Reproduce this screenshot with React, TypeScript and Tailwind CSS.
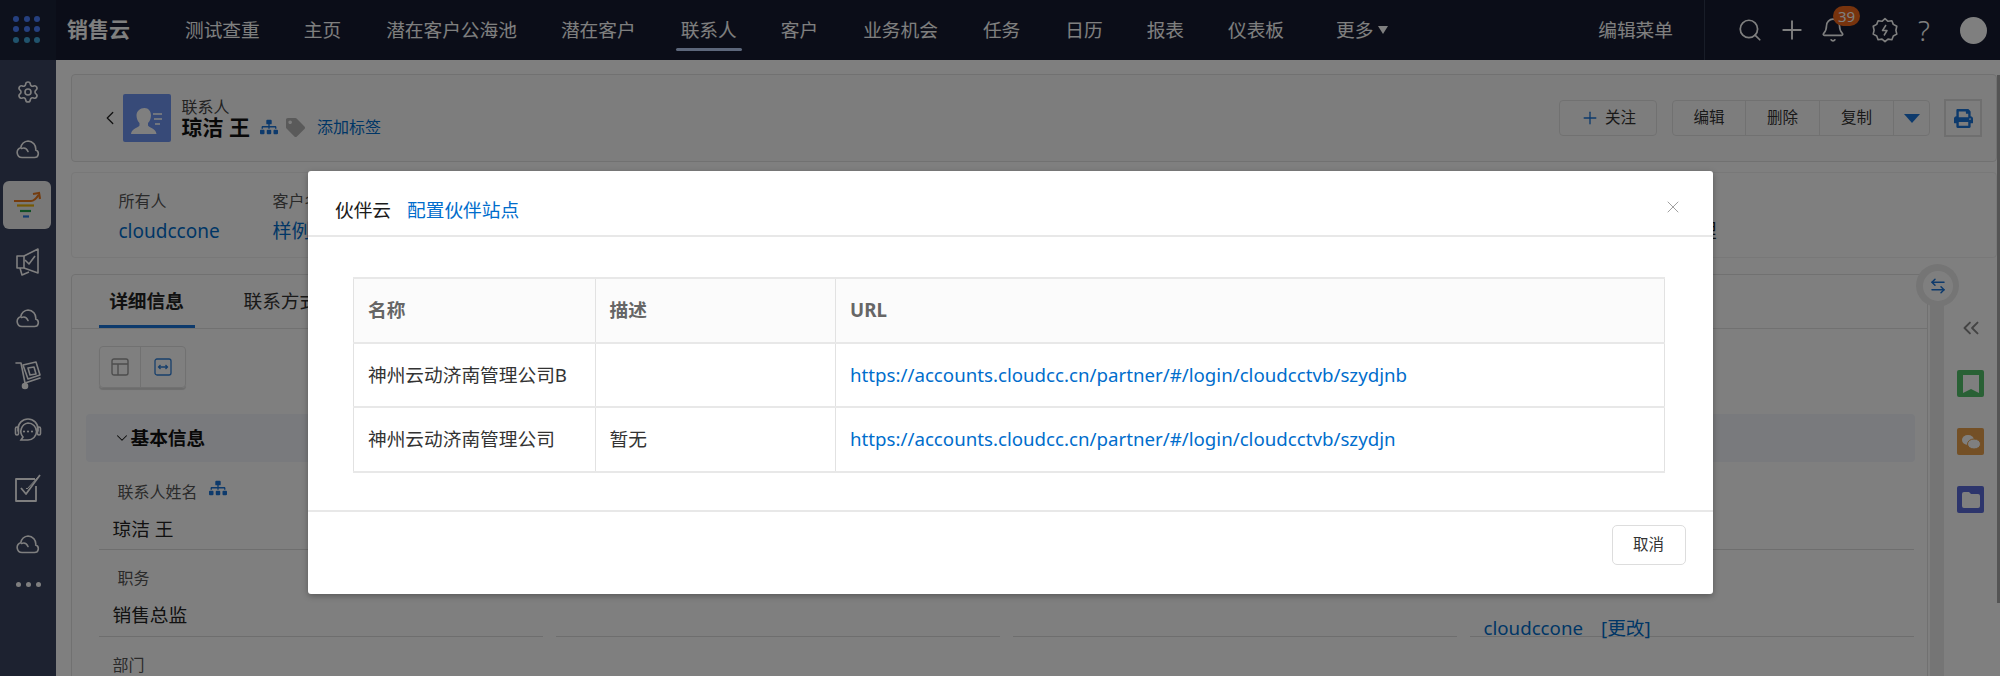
import React from "react";
import { Settings, Search, Plus, Bell, ChevronLeft, ChevronDown, ChevronsLeft, X, ArrowLeftRight } from "lucide-react";
import { FaSitemap, FaTag, FaPrint } from "react-icons/fa";

const font = "font-['Noto_Sans','Noto_Sans_CJK_SC',sans-serif]";
const nav: [string, number][] = [
  ["测试查重", 44], ["主页", 45], ["潜在客户公海池", 44], ["潜在客户", 45], ["联系人", 44], ["客户", 45], ["业务机会", 45], ["任务", 45], ["日历", 44], ["报表", 44], ["仪表板", 52],
];

function Cloud() {
  return (
    <svg width="24" height="22" viewBox="0 0 24 22" fill="none" stroke="white" strokeWidth="1.6" strokeLinecap="round" strokeLinejoin="round">
      <path d="M6 19.5h12.5a3.8 3.8 0 0 0 1.2-7.4A8 8 0 0 0 12 3 7.6 7.6 0 0 0 4.8 9.7 5 5 0 0 0 6 19.5Z" />
      <path d="M5.5 10.5c2.5-1 5-.5 6.5 3" />
    </svg>
  );
}
function Funnel() {
  return (
    <svg width="28" height="28" viewBox="0 0 28 28" fill="none" strokeWidth="2.2">
      <path d="M1 10h17c3 0 5-2 7.5-6" stroke="#e8791e" />
      <path d="M20 3l6-1 1 6" stroke="#e8791e" />
      <path d="M4 14.5h17" stroke="#eab308" />
      <path d="M7 20h11" stroke="#22a04a" />
      <path d="M10 25.5h6" stroke="#2b7de0" />
    </svg>
  );
}
function Megaphone() {
  return (
    <svg width="26" height="30" viewBox="0 0 26 30" fill="none" stroke="white" strokeWidth="1.6" strokeLinejoin="round">
      <path d="M2 9h7v12H2z" />
      <path d="M9 9 23 2v24L9 21" />
      <path d="M5 21l2 7 7-3" />
      <path d="M10 13l4 4 6-8" />
    </svg>
  );
}
function Cart() {
  return (
    <svg width="26" height="30" viewBox="0 0 26 30" fill="none" stroke="white" strokeWidth="1.6" strokeLinejoin="round" strokeLinecap="round">
      <path d="M1 3h5l4 20 15-5" />
      <path d="M8 5l13-3 4 13-12 4z" />
      <path d="M13 8l6-1 2 7-6 1z" />
      <circle cx="10" cy="26" r="2.5" fill="white" />
    </svg>
  );
}
function Headset() {
  return (
    <svg width="28" height="28" viewBox="0 0 28 28" fill="none" stroke="white" strokeWidth="1.6" strokeLinecap="round">
      <path d="M4 14V12a10 10 0 0 1 20 0v2" />
      <rect x="1.5" y="10" width="3" height="8" rx="1.5" />
      <rect x="23.5" y="10" width="3" height="8" rx="1.5" />
      <path d="M14 6a8.5 8.5 0 0 1 0 17H7l2-3a8.5 8.5 0 0 1 5-14Z" />
      <path d="M10 14.5h.01M14 14.5h.01M18 14.5h.01" strokeWidth="2.2" />
    </svg>
  );
}
function Check() {
  return (
    <svg width="28" height="30" viewBox="0 0 28 30" fill="none" stroke="white" strokeWidth="1.8" strokeLinejoin="round">
      <path d="M21 6H2v22h20V13" />
      <path d="M7 15l5 6L26 2" />
      <path d="M12 15l1 1L24 4" strokeWidth="1" />
    </svg>
  );
}
function Gear2() {
  return (
    <svg width="26" height="26" viewBox="0 0 26 26" fill="none" stroke="white" strokeWidth="1.6" strokeLinejoin="round">
      <path d="M13 1.5l3 2.6 3.9-.6 1.4 3.7 3.5 1.9-.9 3.9.9 3.9-3.5 1.9-1.4 3.7-3.9-.6-3 2.6-3-2.6-3.9.6-1.4-3.7-3.5-1.9.9-3.9-.9-3.9 3.5-1.9 1.4-3.7 3.9.6z" transform="translate(0 .2)" />
      <path d="M14 8l-3.5 5.5H15L12 18.5" strokeWidth="1.5" />
    </svg>
  );
}
function Layout1() {
  return (
    <svg width="18" height="18" viewBox="0 0 18 18" fill="none" stroke="#9b9b9b" strokeWidth="1.4">
      <rect x="1" y="1" width="16" height="16" rx="2" />
      <path d="M1 6h16M7 6v11" />
    </svg>
  );
}
function Layout2() {
  return (
    <svg width="18" height="18" viewBox="0 0 18 18" fill="none" stroke="#2f7fd8" strokeWidth="1.3">
      <rect x="1" y="1" width="16" height="16" rx="2" />
      <path d="M4.5 9h9M6.5 7L4.5 9l2 2M11.5 7l2 2-2 2" />
    </svg>
  );
}
function ContactIcon() {
  return (
    <svg width="48" height="48" viewBox="0 0 48 48" fill="white">
      <path d="M21.5 14c4 0 6.500 3.300 6.500 7.500 0 3.200-1.500 6-3 7.500v2.500c0 1.500 8 3 8.500 8.500H8c.5-5.500 8.500-7 8.500-8.500V29c-1.500-1.500-3-4.300-3-7.500 0-4.200 3.500-7.500 8-7.500Z" />
      <path d="M30 19h9v2h-9zM31 24h8v2h-8zM32 29h5v2h-5z" opacity=".8" />
    </svg>
  );
}

function Row({ children }: { children: React.ReactNode }) {
  return <div className="grid grid-cols-[444px_444px_444px_444.500px] gap-x-[13px]">{children}</div>;
}
function Field({ label, value, labelCls = "ml-[19px]", top = "pt-[17px]", icon = false, h = "h-[87.500px]", right = false }: { label?: string; value?: React.ReactNode; labelCls?: string; top?: string; icon?: boolean; h?: string; right?: boolean }) {
  return (
    <div className={`${h} border-b border-[#dcdcdc] ${top}`}>
      {label && (
        <div className={`flex items-center h-[22px] text-[16px] text-[#555] ${labelCls}`}>
          {label}
          {icon && <FaSitemap className="ml-[11px] -mt-[8px] text-[#1a74d8]" size={18} />}
        </div>
      )}
      {value && <div className={`mt-[13px] ml-[14px] h-[26px] leading-[26px] text-[18.700px] ${right ? "text-[#006dcc]" : "text-[#222]"}`}>{value}</div>}
    </div>
  );
}

export default function App() {
  const tdBorder = "border-x border-y-2 border-x-[#e2e2e2] border-y-[#e8e8e8]";
  return (
    <div className={`relative w-[2000px] h-[676px] overflow-hidden bg-white ${font}`}>
      <header className="h-[60px] flex items-center bg-[#161b30] text-white text-[18.700px]">
        <div className="w-[56px] h-full bg-[#1b2238] grid grid-cols-3 gap-x-[3.500px] gap-y-[3.500px] pl-[13px] pr-[15px] py-[15.500px] shrink-0">
          {["#4a80ff", "#4a80ff", "#4a80ff", "#4a80ff", "#4a80ff", "#4a80ff", "#40a6d8", "#40a6d8", "#40a6d8"].map((c, i) => (
            <span key={i} className="w-[6px] h-[6px] rounded-full" style={{ background: c }} />
          ))}
        </div>
        <div className="ml-[11px] w-[64px] text-[21px] font-bold whitespace-nowrap">销售云</div>
        <nav className="ml-[54px] flex items-center h-full">
          {nav.map(([t, g], i) => (
            <div key={t} className="relative h-full flex items-center whitespace-nowrap" style={{ marginRight: g }}>
              {t}
              {t === "联系人" && <span className="absolute left-[-5px] right-[-5px] bottom-[9px] h-[3px] rounded-sm bg-[#b8cdf5]" />}
            </div>
          ))}
          <div className="flex items-center whitespace-nowrap">
            更多
            <span className="ml-[5px] w-0 h-0 border-x-[5.500px] border-x-transparent border-t-[8px] border-t-white" />
          </div>
        </nav>
        <div className="ml-auto flex items-center h-full">
          <span className="mr-[31px] whitespace-nowrap">编辑菜单</span>
          <div className="h-full w-[296px] border-l border-[#333a50] flex items-center">
            <Search className="ml-[32px]" size={26} strokeWidth={1.6} />
            <Plus className="ml-[14px]" size={30} strokeWidth={1.5} />
            <div className="relative ml-[13px]">
              <Bell size={26} strokeWidth={1.5} />
              <span className="absolute left-[13px] top-[-11px] w-[27px] h-[20px] rounded-full bg-[#f0661a] text-[15px] leading-[20px] text-center text-white">39</span>
            </div>
            <div className="ml-[26px]"><Gear2 /></div>
            <span className="ml-[15px] w-[22px] text-center text-[28px] font-light leading-none">?</span>
            <span className="ml-[25px] w-[27px] h-[27px] rounded-full bg-white" />
          </div>
        </div>
      </header>
      <div className="flex h-[616px]">
        <aside className="w-[56px] bg-[#3a4460] shrink-0 flex flex-col items-center pt-[4px] text-white">
          {[<Settings size={24} strokeWidth={1.6} />, <Cloud />, <Funnel />, <Megaphone />, <Cloud />, <Cart />, <Headset />, <Check />, <Cloud />].map((ic, i) => (
            <div key={i} className={`h-[56.500px] w-full flex items-center justify-center`}>
              {i === 2 ? <div className="w-[48px] h-[48px] ml-[-2px] rounded-[6px] bg-[#f0f0f0] flex items-center justify-center">{ic}</div> : ic}
            </div>
          ))}
          <div className="flex gap-[5px] mt-[9px]">
            <span className="w-[5px] h-[5px] rounded-full bg-white" />
            <span className="w-[5px] h-[5px] rounded-full bg-white" />
            <span className="w-[5px] h-[5px] rounded-full bg-white" />
          </div>
        </aside>
        <main className="flex-1 pl-[14.500px] pr-[3px] pt-[14px] flex flex-col min-w-0">
          <section className="h-[88px] border border-[#e2e2e2] rounded-[4px] bg-[#fbfbfb] flex items-center pl-[27px] pr-[14px] shrink-0">
            <ChevronLeft size={22} strokeWidth={1.4} className="text-[#222]" />
            <div className="ml-[2px] w-[48px] h-[48px] rounded-[2px] bg-[#6f95f0]"><ContactIcon /></div>
            <div className="ml-[11px] mt-[-2px] flex flex-col">
              <span className="text-[16px] leading-[17px] mt-[3px] text-[#444]">联系人</span>
              <span className="text-[21px] leading-[22px] font-bold text-[#111] whitespace-nowrap">琼洁 王</span>
            </div>
            <div className="ml-[10px] mt-[18px] flex items-center">
              <FaSitemap size={18} className="text-[#1a74d8]" />
              <FaTag size={19} className="ml-[8px] text-[#b4b4b4]" style={{ transform: "rotate(0deg)" }} />
              <span className="ml-[12px] text-[16px] text-[#006dcc] whitespace-nowrap">添加标签</span>
            </div>
            <div className="ml-auto flex items-center text-[15.500px] text-[#333]">
              <button className="w-[98px] h-[36px] border border-[#e2e2e2] rounded-[4px] flex items-center justify-center gap-[5px]">
                <Plus size={20} strokeWidth={1.6} className="text-[#1a74d8]" />
                <span>关注</span>
              </button>
              <div className="ml-[15px] w-[258px] h-[36px] border border-[#e2e2e2] rounded-[4px] grid grid-cols-[73px_74px_74px_1fr] divide-x divide-[#e2e2e2]">
                <span className="flex items-center justify-center">编辑</span>
                <span className="flex items-center justify-center">删除</span>
                <span className="flex items-center justify-center">复制</span>
                <span className="flex items-center justify-center"><span className="w-0 h-0 border-x-[8px] border-x-transparent border-t-[9px] border-t-[#1a74d8]" /></span>
              </div>
              <button className="ml-[14px] w-[38px] h-[38px] border-2 border-[#dedede] flex items-center justify-center">
                <FaPrint size={19} className="text-[#1a74d8]" />
              </button>
            </div>
          </section>
          <section className="mt-[10px] h-[86px] border border-[#f0f0f0] rounded-[4px] bg-white shrink-0 flex pl-[47px] pt-[17px]">
            <div className="w-[154px]">
              <div className="text-[16px] leading-[22px] text-[#555]">所有人</div>
              <div className="text-[19px] leading-[26px] mt-[6px] text-[#006dcc]">cloudccone</div>
            </div>
            <div className="w-[200px]">
              <div className="text-[16px] leading-[22px] text-[#555]">客户名称</div>
              <div className="text-[19px] leading-[26px] mt-[6px] text-[#006dcc]">样例客户</div>
            </div>
            <div className="ml-[1206px] pt-[28px] text-[19px] leading-[26px] text-[#222] whitespace-nowrap">经理</div>
          </section>
          <div className="mt-[16px] flex flex-1 min-h-0">
            <section className="w-[1857.500px] h-[420px] border border-[#e2e2e2] rounded-t-[4px] shrink-0">
              <div className="h-[54px] border-b border-[#e2e2e2] flex pl-[27px] text-[18.700px]">
                <div className="w-[96px] h-full flex items-center justify-center font-bold text-[#222] border-b-[3px] border-[#1a74d8] pt-[3px]">详细信息</div>
                <div className="ml-[49px] h-full flex items-center text-[#333] whitespace-nowrap">联系方式</div>
              </div>
              <div className="pt-[17px] pl-[27.500px]">
                <div className="w-[87px] h-[42px] border border-[#e2e2e2] rounded-[4px] grid grid-cols-[41px_1fr] divide-x divide-[#e2e2e2] shadow-[0_2px_1px_rgba(0,0,0,.15)]">
                  <span className="flex items-center justify-center"><Layout1 /></span>
                  <span className="flex items-center justify-center"><Layout2 /></span>
                </div>
              </div>
              <div className="mt-[26px] ml-[14px] mr-[12px] h-[48px] rounded-[4px] bg-[#f2f5fa] flex items-center pl-[27px] text-[18.700px] font-bold text-[#111]">
                <ChevronDown size={18} strokeWidth={1.4} className="mr-[0px]" />
                基本信息
              </div>
              <div className="ml-[27px]">
                <Row>
                  <Field label="联系人姓名" value="琼洁 王" top="pt-[19px]" icon />
                  <Field />
                  <Field />
                  <Field />
                </Row>
                <Row>
                  <Field label="职务" value="销售总监" />
                  <Field />
                  <Field />
                  <Field value={<span className="whitespace-nowrap">cloudccone<span className="ml-[18px]">[更改]</span></span>} top="pt-[52px]" right />
                </Row>
                <Row>
                  <Field label="部门" labelCls="ml-[14px]" />
                </Row>
              </div>
            </section>
            <div className="relative flex-1 flex flex-col items-end pr-[13px] pt-[41px]">
              <div className="absolute left-[2px] top-[25px] w-[14px] h-[400px] bg-[#eaeaea]" />
              <div className="absolute left-[-12px] top-[-10px] w-[43px] h-[43px] rounded-full bg-[#eaeaea] flex items-center justify-center">
                <div className="w-[30px] h-[30px] rounded-full bg-white flex items-center justify-center">
                  <ArrowLeftRight size={18} className="text-[#1a74d8]" strokeWidth={2} />
                </div>
              </div>
              <ChevronsLeft size={26} strokeWidth={1.8} className="mr-[0px] text-[#888]" />
              <div className="mt-[29px] w-[27px] h-[27px] rounded-[2px] bg-[#52c26a] flex items-center justify-center">
                <svg width="16" height="18" viewBox="0 0 16 18" fill="white"><path d="M0 0h16v18l-8-4-8 4z" /></svg>
              </div>
              <div className="mt-[31px] w-[27px] h-[27px] rounded-[2px] bg-[#e8a04c] flex items-center justify-center">
                <svg width="20" height="16" viewBox="0 0 20 16" fill="white"><ellipse cx="7" cy="6" rx="6" ry="5" /><ellipse cx="13" cy="10" rx="6.500" ry="5" stroke="#e8a04c" /></svg>
              </div>
              <div className="mt-[31px] w-[27px] h-[27px] rounded-[2px] bg-[#5a6bd8] flex items-center justify-center">
                <svg width="18" height="16" viewBox="0 0 18 16" fill="white"><path d="M0 2a2 2 0 0 1 2-2h5l2 2h7a2 2 0 0 1 2 2v10a2 2 0 0 1-2 2H2a2 2 0 0 1-2-2z" /></svg>
              </div>
            </div>
          </div>
        </main>
      </div>
      <div className="absolute right-0 top-[75px] w-[3px] h-[528px] bg-[#a8a8a8]" />

      <div className="absolute inset-0 bg-black/50" />

      <div className="absolute left-[308px] top-[171px] w-[1405px] h-[423px] bg-white rounded-[3px] shadow-[0_2px_6px_rgba(0,0,0,.3)] flex flex-col">
        <div className="h-[66px] border-b-2 border-[#e8e8e8] flex items-center pl-[27px] pr-[30px] text-[18.700px] shrink-0 pt-[14px]">
          <span className="text-[#1a1a1a]">伙伴云</span>
          <span className="ml-[16px] text-[#006dcc]">配置伙伴站点</span>
          <X className="ml-auto -mt-[6px] text-[#a0a0a0]" size={20} strokeWidth={1.2} />
        </div>
        <div className="pt-[40px] px-[45px] pr-[48px] h-[275px] shrink-0 border-b-2 border-[#e8e8e8]">
          <table className="w-[1312px] table-fixed border-collapse text-[18.700px] text-[#333]">
            <colgroup>
              <col className="w-[241.500px]" />
              <col className="w-[240.500px]" />
              <col />
            </colgroup>
            <tbody>
              <tr className="h-[64.500px] bg-[#fbfbfb] text-[#666] font-bold">
                <td className={`${tdBorder} px-[14px]`}>名称</td>
                <td className={`${tdBorder} px-[14px]`}>描述</td>
                <td className={`${tdBorder} px-[14px]`}>URL</td>
              </tr>
              <tr className="h-[64.500px]">
                <td className={`${tdBorder} px-[14px]`}>神州云动济南管理公司B</td>
                <td className={`${tdBorder} px-[14px]`}></td>
                <td className={`${tdBorder} px-[14px] text-[#006dcc]`}>https://accounts.cloudcc.cn/partner/#/login/cloudcctvb/szydjnb</td>
              </tr>
              <tr className="h-[64.500px]">
                <td className={`${tdBorder} px-[14px]`}>神州云动济南管理公司</td>
                <td className={`${tdBorder} px-[14px]`}>暂无</td>
                <td className={`${tdBorder} px-[14px] text-[#006dcc]`}>https://accounts.cloudcc.cn/partner/#/login/cloudcctvb/szydjn</td>
              </tr>
            </tbody>
          </table>
        </div>
        <div className="flex-1 flex items-start justify-end pt-[13px] pr-[27.500px]">
          <button className="w-[74px] h-[40px] border border-[#ddd] rounded-[5px] text-[15.500px] text-[#333]">取消</button>
        </div>
      </div>
    </div>
  );
}
